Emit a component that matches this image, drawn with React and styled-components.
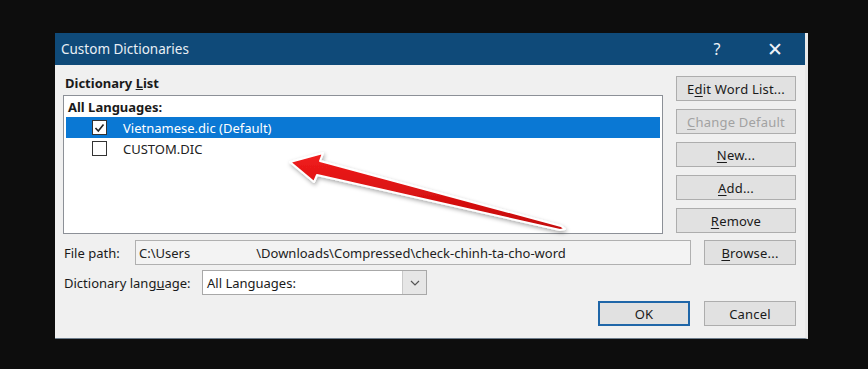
import styled, { createGlobalStyle } from "styled-components";

const GlobalStyle = createGlobalStyle`
  html, body {
    margin: 0;
    padding: 0;
    background: #0d0d0d;
  }
  body {
    font-family: "Noto Sans", "Open Sans", "Liberation Sans", sans-serif;
    font-size: 13px;
    color: #1a1a1a;
  }
`;

const Page = styled.div`
  width: 868px;
  height: 369px;
  background: #0d0d0d;
  padding: 33px 0 0 55px;
  box-sizing: border-box;
`;

const Dialog = styled.div`
  position: relative;
  width: 753px;
  height: 306px;
  background: #f0f0f0;
  border-right: 3px solid #e9e9e9;
  border-bottom: 1px solid #6d7d8c;
  box-sizing: border-box;
  display: flex;
  flex-direction: column;
`;

const TitleBar = styled.div`
  height: 32px;
  background: #0f4a79;
  color: #e9eff5;
  display: flex;
  align-items: center;
  padding: 0 0 0 6px;
  font-size: 13.5px;
`;

const Title = styled.div`
  flex: 1;
`;

const TitleButton = styled.div`
  width: 42px;
  text-align: center;
  font-size: ${({ $big }) => ($big ? "19px" : "16px")};
  margin-right: ${({ $last }) => ($last ? "9px" : "16px")};
  color: #eef3f8;
`;

const Body = styled.div`
  flex: 1;
  padding: 11px 9px 0 8px;
  display: flex;
  flex-direction: column;
`;

const TopRow = styled.div`
  display: flex;
  gap: 13px;
`;

const LeftCol = styled.div`
  width: 600px;
  display: flex;
  flex-direction: column;
`;

const GroupLabel = styled.div`
  font-weight: 700;
  height: 19px;
  line-height: 14px;
  padding: 0 0 0 2px;
  margin-top: 0;
`;

const ListBox = styled.div`
  height: 139px;
  background: #fff;
  border: 1px solid #8c9097;
  box-sizing: border-box;
  padding: 2px 2px 0 2px;
`;

const ListHeader = styled.div`
  font-weight: 700;
  height: 19px;
  line-height: 18px;
  padding-left: 2px;
`;

const Row = styled.div`
  height: 21px;
  display: flex;
  align-items: center;
  background: ${({ $selected }) => ($selected ? "#0a78d4" : "transparent")};
  color: ${({ $selected }) => ($selected ? "#fff" : "#222")};
  padding-left: 26px;
`;

const CheckBox = styled.span`
  width: 13px;
  height: 13px;
  border: 1.5px solid #333;
  background: #fff;
  display: inline-flex;
  align-items: center;
  justify-content: center;
  margin-right: 16px;
`;

const ButtonCol = styled.div`
  width: 120px;
  display: flex;
  flex-direction: column;
  gap: 8px;
`;

const Button = styled.button`
  font-family: inherit;
  font-size: 13px;
  width: ${({ $w }) => $w || "120px"};
  height: 25px;
  padding: 0;
  background: #e1e1e1;
  border: ${({ $default }) => ($default ? "2px solid #1f66a8" : "1px solid #adadad")};
  color: ${({ disabled }) => (disabled ? "#a2a2a2" : "#1a1a1a")};
  letter-spacing: 0.2px;
  u {
    text-underline-offset: 2px;
  }
`;

const FieldRow = styled.div`
  display: flex;
  align-items: center;
  margin-top: ${({ $top }) => $top || "0"};
`;

const Label = styled.div`
  width: ${({ $w }) => $w};
  padding-left: 1px;
  flex-shrink: 0;
`;

const PathField = styled.div`
  width: 556px;
  height: 25px;
  border: 1px solid #b0b0b0;
  background: #f3f3f3;
  box-sizing: border-box;
  display: flex;
  align-items: center;
  padding-left: 3px;
  margin-right: 13px;
  white-space: nowrap;
  overflow: hidden;
  color: #222;
`;

const Gap = styled.span`
  display: inline-block;
  width: ${({ $w }) => $w};
`;

const Select = styled.div`
  width: 225px;
  height: 25px;
  border: 1px solid #a8a8a8;
  background: #fff;
  box-sizing: border-box;
  display: flex;
  align-items: center;
`;

const SelectText = styled.div`
  flex: 1;
  padding-left: 4px;
`;

const SelectArrow = styled.div`
  width: 23px;
  height: 23px;
  background: #e6e6e6;
  border-left: 1px solid #c9c9c9;
  display: flex;
  align-items: center;
  justify-content: center;
`;

const BottomRow = styled.div`
  display: flex;
  justify-content: flex-end;
  gap: 14px;
  margin-top: 6px;
`;

const Overlay = styled.svg`
  position: absolute;
  left: 0;
  top: 0;
  width: 753px;
  height: 309px;
  pointer-events: none;
`;

export default function App() {
  return (
    <>
      <GlobalStyle />
      <Page>
        <Dialog>
          <TitleBar>
            <Title>Custom Dictionaries</Title>
            <TitleButton>?</TitleButton>
            <TitleButton $big $last>✕</TitleButton>
          </TitleBar>
          <Body>
            <TopRow>
              <LeftCol>
                <GroupLabel>
                  Dictionary <u>L</u>ist
                </GroupLabel>
                <ListBox>
                  <ListHeader>All Languages:</ListHeader>
                  <Row $selected>
                    <CheckBox>
                      <svg width="11" height="10" viewBox="0 0 11 10">
                        <polyline points="1.5,5 4.3,8 9.5,1.5" fill="none" stroke="#222" strokeWidth="1.6" />
                      </svg>
                    </CheckBox>
                    Vietnamese.dic (Default)
                  </Row>
                  <Row>
                    <CheckBox />
                    CUSTOM.DIC
                  </Row>
                </ListBox>
              </LeftCol>
              <ButtonCol>
                <Button>
                  E<u>d</u>it Word List...
                </Button>
                <Button disabled>
                  <u>C</u>hange Default
                </Button>
                <Button>
                  <u>N</u>ew...
                </Button>
                <Button>
                  <u>A</u>dd...
                </Button>
                <Button>
                  <u>R</u>emove
                </Button>
              </ButtonCol>
            </TopRow>
            <FieldRow $top="6px">
              <Label $w="71px">File path:</Label>
              <PathField>
                C:\Users<Gap $w="66px" />\Downloads\Compressed\check-chinh-ta-cho-word
              </PathField>
              <Button $w="92px">
                <u>B</u>rowse...
              </Button>
            </FieldRow>
            <FieldRow $top="5px">
              <Label $w="138px">
                Dictionary lang<u>u</u>age:
              </Label>
              <Select>
                <SelectText>All Languages:</SelectText>
                <SelectArrow>
                  <svg width="10" height="6" viewBox="0 0 10 6">
                    <polyline points="1,1 5,5 9,1" fill="none" stroke="#555" strokeWidth="1.2" />
                  </svg>
                </SelectArrow>
              </Select>
            </FieldRow>
            <BottomRow>
              <Button $w="92px" $default>
                OK
              </Button>
              <Button $w="92px">Cancel</Button>
            </BottomRow>
          </Body>
          <Overlay viewBox="55 33 753 309">
            <defs>
              <linearGradient id="arrowFill" x1="0" y1="0" x2="0" y2="1">
                <stop offset="0" stopColor="#f21d1d" />
                <stop offset="1" stopColor="#c40808" />
              </linearGradient>
              <filter id="arrowShadow" x="-10%" y="-30%" width="120%" height="160%">
                <feDropShadow dx="1" dy="2" stdDeviation="2" floodColor="#000" floodOpacity="0.35" />
              </filter>
            </defs>
            <polygon
              points="290,162 323,153 320,161 561,226 565,229 560,230 317,175 314,182"
              fill="url(#arrowFill)"
              stroke="#fff"
              strokeWidth="2"
              strokeLinejoin="round"
              filter="url(#arrowShadow)"
            />
          </Overlay>
        </Dialog>
      </Page>
    </>
  );
}
